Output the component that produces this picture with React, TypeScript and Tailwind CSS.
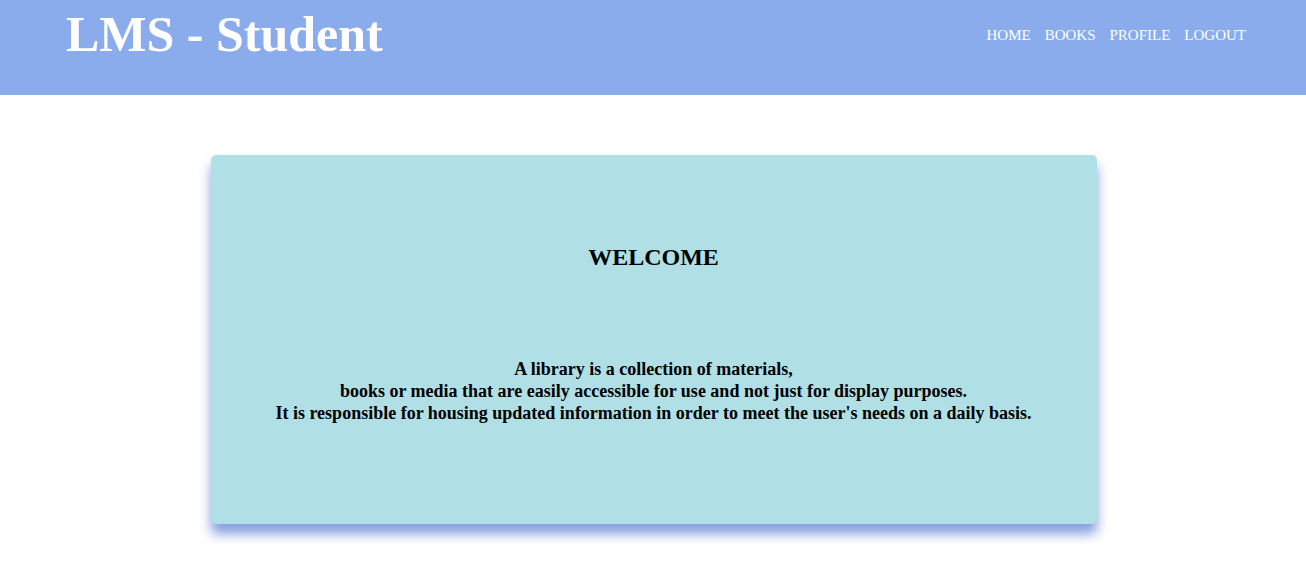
export default function App() {
  return (
    <div className="min-h-[583px] bg-white" style={{ fontFamily: '"Liberation Serif", "Times New Roman", serif' }}>
      <header className="h-[95px] bg-[#8aacec] flex items-start justify-between pl-[66px] pr-[60px]">
        <h1 className="text-[50px] font-bold text-white leading-none mt-[9px]">LMS - Student</h1>
        <nav className="flex gap-[14px] text-white text-[15px] mt-[24px]">
          <a>HOME</a>
          <a>BOOKS</a>
          <a>PROFILE</a>
          <a>LOGOUT</a>
        </nav>
      </header>
      <main className="flex justify-center pt-[60px] pl-[1px]">
        <div className="w-[886px] h-[369px] bg-[#b0dfe5] rounded-[5px] shadow-[0_10px_12px_rgba(105,135,215,0.8)] flex flex-col items-center text-black">
          <h2 className="text-[24px] font-bold mt-[88px] leading-[28px]">WELCOME</h2>
          <p className="text-[18px] font-bold text-center leading-[22px] mt-[87px]">
            A library is a collection of materials,
            <br />
            books or media that are easily accessible for use and not just for display purposes.
            <br />
            It is responsible for housing updated information in order to meet the user's needs on a daily basis.
          </p>
        </div>
      </main>
    </div>
  );
}
